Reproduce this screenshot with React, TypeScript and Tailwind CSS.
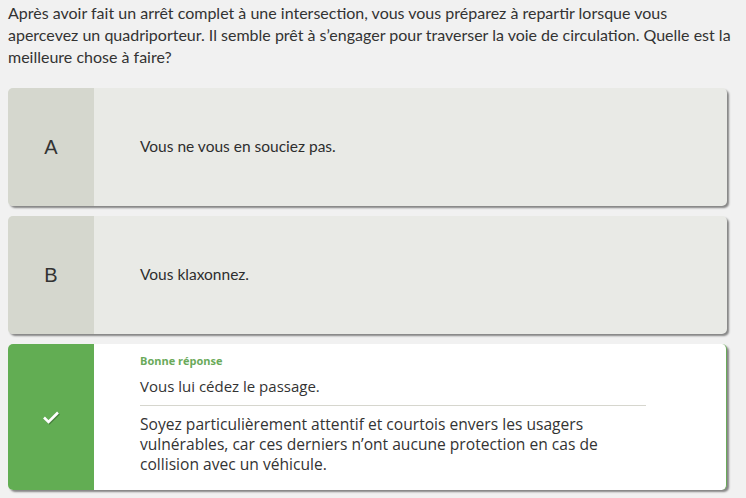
import React from "react";

const QUESTION =
  "Après avoir fait un arrêt complet à une intersection, vous vous préparez à repartir lorsque vous apercevez un quadriporteur. Il semble prêt à s’engager pour traverser la voie de circulation. Quelle est la meilleure chose à faire?";

function Choice({ letter, text }: { letter: string; text: string }) {
  return (
    <div className="flex h-[118px] overflow-hidden rounded-[5px] bg-[#e9eae6] shadow-[2px_2px_2px_rgba(0,0,0,0.45)]">
      <div className="flex w-[86px] shrink-0 items-center justify-center bg-[#d5d7ce] font-['Liberation_Sans',sans-serif] text-[20px] text-[#333]">
        {letter}
      </div>
      <div className="flex items-center pl-[46px] font-['Lato',sans-serif] text-[15.5px] text-[#2e2e2e]">
        {text}
      </div>
    </div>
  );
}

export default function App() {
  return (
    <div className="min-h-[498px] w-[746px] bg-[#f1f1f1] px-2 pt-[2px]">
      <p className="w-[728px] font-['Lato',sans-serif] text-[16px] leading-[22px] text-[#333]">
        {QUESTION}
      </p>

      <div className="mt-[20px] flex w-[719px] flex-col gap-[10px]">
        <Choice letter="A" text="Vous ne vous en souciez pas." />
        <Choice letter="B" text="Vous klaxonnez." />

        {/* correct answer */}
        <div className="flex h-[146px] overflow-hidden rounded-[5px] border-r border-[#6aaa5a] bg-white shadow-[2px_2px_2px_rgba(0,0,0,0.45)]">
          <div className="flex w-[86px] shrink-0 items-center justify-center bg-[#62ad53]">
            <svg width="18" height="14" viewBox="0 0 18 14" className="drop-shadow-[1px_1px_0_rgba(0,0,0,0.25)]">
              <path d="M2 7.5 L6.5 12 L16 2.5" fill="none" stroke="#fff" strokeWidth="2.6" />
            </svg>
          </div>
          <div className="w-[552px] pl-[46px] pt-[10px] font-['Open_Sans',sans-serif] text-[#333]">
            <div className="text-[11px] font-bold leading-[14px] text-[#6aaa5a]">Bonne réponse</div>
            <div className="mt-[8px] border-b border-[#d6d6ce] pb-[9px] text-[15px] leading-[20px]">
              Vous lui cédez le passage.
            </div>
            <div className="mt-[8px] w-[470px] text-[15.6px] leading-[20px]">
              Soyez particulièrement attentif et courtois envers les usagers vulnérables, car ces
              derniers n’ont aucune protection en cas de collision avec un véhicule.
            </div>
          </div>
        </div>
      </div>
    </div>
  );
}
